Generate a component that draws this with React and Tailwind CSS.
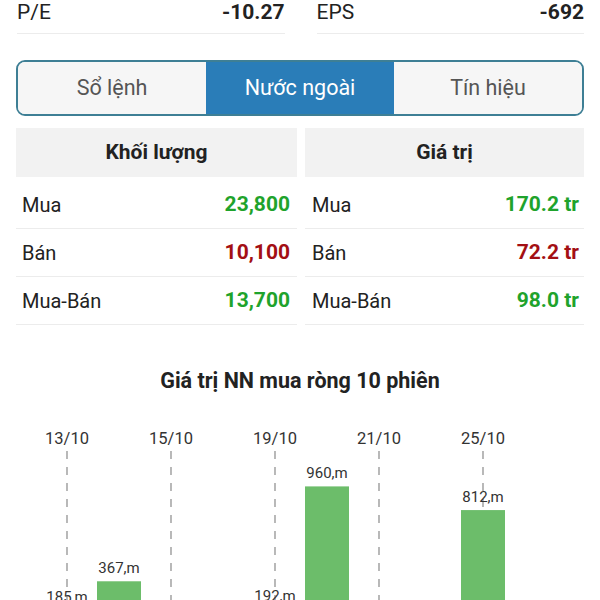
import React from 'react'

const volumeRows = [
  { label: 'Mua', value: '23,800', color: 'text-[#1fa32c]' },
  { label: 'Bán', value: '10,100', color: 'text-[#a30f14]' },
  { label: 'Mua-Bán', value: '13,700', color: 'text-[#1fa32c]' }
]

const valueRows = [
  { label: 'Mua', value: '170.2 tr', color: 'text-[#1fa32c]' },
  { label: 'Bán', value: '72.2 tr', color: 'text-[#a30f14]' },
  { label: 'Mua-Bán', value: '98.0 tr', color: 'text-[#1fa32c]' }
]

// chart: 10 sessions, 52px apart, first at x=67
const dates = ['13/10', '15/10', '19/10', '21/10', '25/10']
const bars = [
  { x: 67, v: 185 },
  { x: 119, v: 367 },
  { x: 275, v: 192 },
  { x: 327, v: 960 },
  { x: 483, v: 812 }
]
const BASE = 240
const SCALE = 0.16

function Stat({ label, value }) {
  return (
    <div className="flex-1 flex items-start justify-between h-[34px] border-b border-[#ececec]">
      <span className="leading-[24px] text-[21px] text-[#222]">{label}</span>
      <span className="leading-[24px] text-[21px] font-bold text-[#222]">{value}</span>
    </div>
  )
}

function Table({ title, rows, padL, padR }) {
  return (
    <div className="flex flex-col">
      <div className="h-[49px] bg-[#f2f2f2] flex items-center justify-center text-[21px] font-bold text-[#222]">
        {title}
      </div>
      <div className="h-[4px]" />
      {rows.map((r) => (
        <div key={r.label} className={`h-[48px] flex items-center justify-between border-b border-[#ececec] ${padL} ${padR}`}>
          <span className="text-[20px] text-[#222]">{r.label}</span>
          <span className={`text-[21px] font-bold ${r.color}`}>{r.value}</span>
        </div>
      ))}
    </div>
  )
}

function Chart() {
  return (
    <svg width="600" height="204" className="block mt-[5px]" style={{ fontFamily: 'Roboto, sans-serif' }}>
      {dates.map((d, i) => (
        <g key={d}>
          <text x={67 + i * 104} y={44} textAnchor="middle" fontSize="16.5" fill="#333">{d}</text>
          <line x1={67 + i * 104} x2={67 + i * 104} y1={51} y2={240} stroke="#8a8a8a" strokeWidth="1.2" strokeDasharray="8 8" />
        </g>
      ))}
      {bars.map((b) => {
        const top = BASE - b.v * SCALE
        return (
          <g key={b.x}>
            <rect x={b.x - 22} y={top} width="44" height={b.v * SCALE} fill="#6cbd6a" />
            <text x={b.x} y={top - 8} textAnchor="middle" fontSize="15" fill="#333">{b.v},m</text>
          </g>
        )
      })}
    </svg>
  )
}

export default function App() {
  return (
    <div className="w-[600px] h-[600px] overflow-hidden bg-white font-['Roboto',sans-serif]">
      {/* P/E, EPS */}
      <div className="flex gap-[32px] pl-[17px] pr-[16px]">
        <Stat label="P/E" value="-10.27" />
        <Stat label="EPS" value="-692" />
      </div>

      {/* Tabs */}
      <div className="mt-[26px] mx-[16px] h-[56px] flex border-2 border-[#3e7f95] rounded-[9px] overflow-hidden">
        <div className="flex-1 flex items-center justify-center bg-[#f6f6f6] text-[21.5px] text-[#555]">Sổ lệnh</div>
        <div className="flex-1 flex items-center justify-center bg-[#2a7db8] text-[21.5px] text-white">Nước ngoài</div>
        <div className="flex-1 flex items-center justify-center bg-[#f6f6f6] text-[21.5px] text-[#555]">Tín hiệu</div>
      </div>

      {/* Tables */}
      <div className="mt-[12px] px-[16px] grid grid-cols-[281px_279px] gap-x-[8px]">
        <Table title="Khối lượng" rows={volumeRows} padL="pl-[6px]" padR="pr-[7px]" />
        <Table title="Giá trị" rows={valueRows} padL="pl-[7px]" padR="pr-[5px]" />
      </div>

      {/* Chart */}
      <div className="mt-[42px] h-[28px] flex items-center justify-center text-[21.5px] font-bold text-[#222]">
        Giá trị NN mua ròng 10 phiên
      </div>
      <Chart />
    </div>
  )
}
